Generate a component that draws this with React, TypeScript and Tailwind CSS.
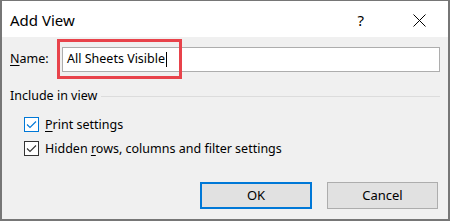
import React from "react";

const FONT = { fontFamily: '"Noto Sans", "Segoe UI", sans-serif' };

function CheckBox({ focused }: { focused?: boolean }) {
  return (
    <span
      className={`flex h-[15px] w-[15px] shrink-0 items-center justify-center border bg-white ${
        focused ? "border-[#0078d7]" : "border-[#333333]"
      }`}
    >
      <svg width="13" height="13" viewBox="0 0 13 13" fill="none">
        <path
          d="M2 6.5 L5 9.5 L11 3.5"
          stroke={focused ? "#0078d7" : "#333333"}
          strokeWidth="1.1"
        />
      </svg>
    </span>
  );
}

export default function App() {
  return (
    <div
      className="relative flex h-[221px] w-[450px] flex-col border-x-2 border-b-2 border-t border-[#767676] bg-[#f0f0f0] text-black"
      style={FONT}
    >
      {/* title bar */}
      <div className="flex h-[36px] items-center bg-white pl-[8px] pt-[2px]">
        <span className="text-[15px] leading-none">Add View</span>
        <span className="ml-auto mr-[49px] text-[15px] leading-none">?</span>
        <svg className="mr-[22px]" width="13" height="13" viewBox="0 0 13 13">
          <path d="M0.5 0.5 L12.5 12.5 M12.5 0.5 L0.5 12.5" stroke="#000" strokeWidth="1" />
        </svg>
      </div>

      <div className="flex flex-col px-[8px] text-[12.5px]">
        {/* name row */}
        <div className="mt-[10px] flex h-[25px] items-center">
          <span className="w-[52px]">
            <span className="underline underline-offset-2">N</span>ame:
          </span>
          <div className="flex h-[25px] flex-1 items-center border border-[#adadad] bg-white pl-[4px]">
            <span>All Sheets Visible</span>
            <span className="ml-[1px] h-[15px] w-px bg-black" />
          </div>
        </div>

        {/* group header */}
        <div className="mt-[15px] flex h-[18px] items-center">
          <span className="leading-[18px]">Include in view</span>
          <span className="ml-[4px] h-px flex-1 bg-[#dcdcdc]" />
        </div>

        {/* checkboxes */}
        <div className="mt-[12px] flex h-[15px] items-center pl-[14px] leading-[15px]">
          <CheckBox focused />
          <span className="ml-[6px]">
            <span className="underline underline-offset-2">P</span>rint settings
          </span>
        </div>
        <div className="mt-[9px] flex h-[15px] items-center pl-[14px] leading-[15px]">
          <CheckBox />
          <span className="ml-[6px]">
            Hidden <span className="underline underline-offset-2">r</span>ows, columns and filter settings
          </span>
        </div>

        {/* buttons */}
        <div className="mt-[26px] flex justify-end gap-[15px] pr-[2px]">
          <button className="h-[27px] w-[112px] border-2 border-[#0078d7] bg-[#e1e1e1] text-[13px]">
            OK
          </button>
          <button className="h-[27px] w-[111px] border border-[#adadad] bg-[#e1e1e1] text-[13px]">
            Cancel
          </button>
        </div>
      </div>

      {/* annotation highlight */}
      <div className="absolute left-[55px] top-[38px] h-[40px] w-[125px] border-[3px] border-[#e8434b]" />
    </div>
  );
}
